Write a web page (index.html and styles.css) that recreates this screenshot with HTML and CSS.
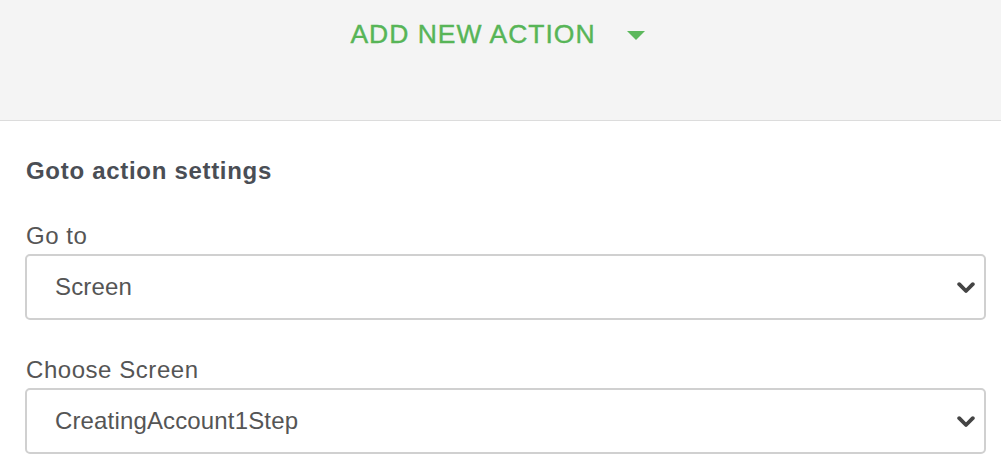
FILE: index.html
```html
<!DOCTYPE html>
<html>
<head>
<meta charset="utf-8">
<link rel="stylesheet" href="styles.css">
</head>
<body>
<div class="topbar">
  <button class="add-btn"><span>ADD NEW ACTION</span>
    <svg class="caret" width="18" height="10" viewBox="0 0 18 10"><polygon points="0,0 18,0 9,9" fill="#5cb85c"/></svg>
  </button>
</div>
<div class="panel">
  <h2 class="title">Goto action settings</h2>
  <div class="field">
    <label class="label">Go to</label>
    <div class="select"><span>Screen</span>
      <svg class="chev" width="18" height="12" viewBox="0 0 18 12"><polyline points="2.2,2.2 9,9 15.8,2.2" fill="none" stroke="#444" stroke-width="3.8" stroke-linecap="round" stroke-linejoin="round"/></svg>
    </div>
  </div>
  <div class="field second">
    <label class="label">Choose Screen</label>
    <div class="select"><span>CreatingAccount1Step</span>
      <svg class="chev" width="18" height="12" viewBox="0 0 18 12"><polyline points="2.2,2.2 9,9 15.8,2.2" fill="none" stroke="#444" stroke-width="3.8" stroke-linecap="round" stroke-linejoin="round"/></svg>
    </div>
  </div>
</div>
</body>
</html>
```
FILE: styles.css
```css
* { box-sizing: border-box; }
html, body { margin: 0; padding: 0; background: #fff; }
body { font-family: "Liberation Sans", Arial, sans-serif; width: 1001px; height: 472px; overflow: hidden; }
.topbar {
  height: 121px;
  background: #f4f4f4;
  border-bottom: 1px solid #dcdcdc;
  display: flex;
  justify-content: center;
  align-items: flex-start;
  padding-top: 17px;
}
.add-btn {
  background: none; border: 0; padding: 0 6px 0 0;
  font-family: inherit;
  font-size: 26.5px;
  letter-spacing: 1px;
  color: #57b557;
  display: flex; align-items: center; gap: 31px;
  line-height: 34px;
  -webkit-text-stroke: 0.4px #57b557;
}
.caret { margin-top: 4px; }
.panel { padding: 35px 15px 0 25px; }
.title {
  margin: 0;
  font-size: 24px;
  font-weight: bold;
  letter-spacing: 0.7px;
  color: #4a4e55;
  line-height: 30px;
  padding-left: 1px;
}
.field { display: flex; flex-direction: column; }
.label {
  font-size: 24px;
  letter-spacing: 0.55px;
  color: #555;
  line-height: 30px;
  margin-top: 35px;
  margin-bottom: 3px;
  padding-left: 1px;
}
.second .label { margin-top: 35px; margin-bottom: 3px; }
.select {
  height: 66px;
  border: 2px solid #d0d0d0;
  border-radius: 5px;
  display: flex; align-items: center; justify-content: space-between;
  padding: 0 9px 0 28px;
  font-size: 24px;
  letter-spacing: 0.15px;
  color: #555;
}
.chev { display: block; margin-top: 1px; }
```
